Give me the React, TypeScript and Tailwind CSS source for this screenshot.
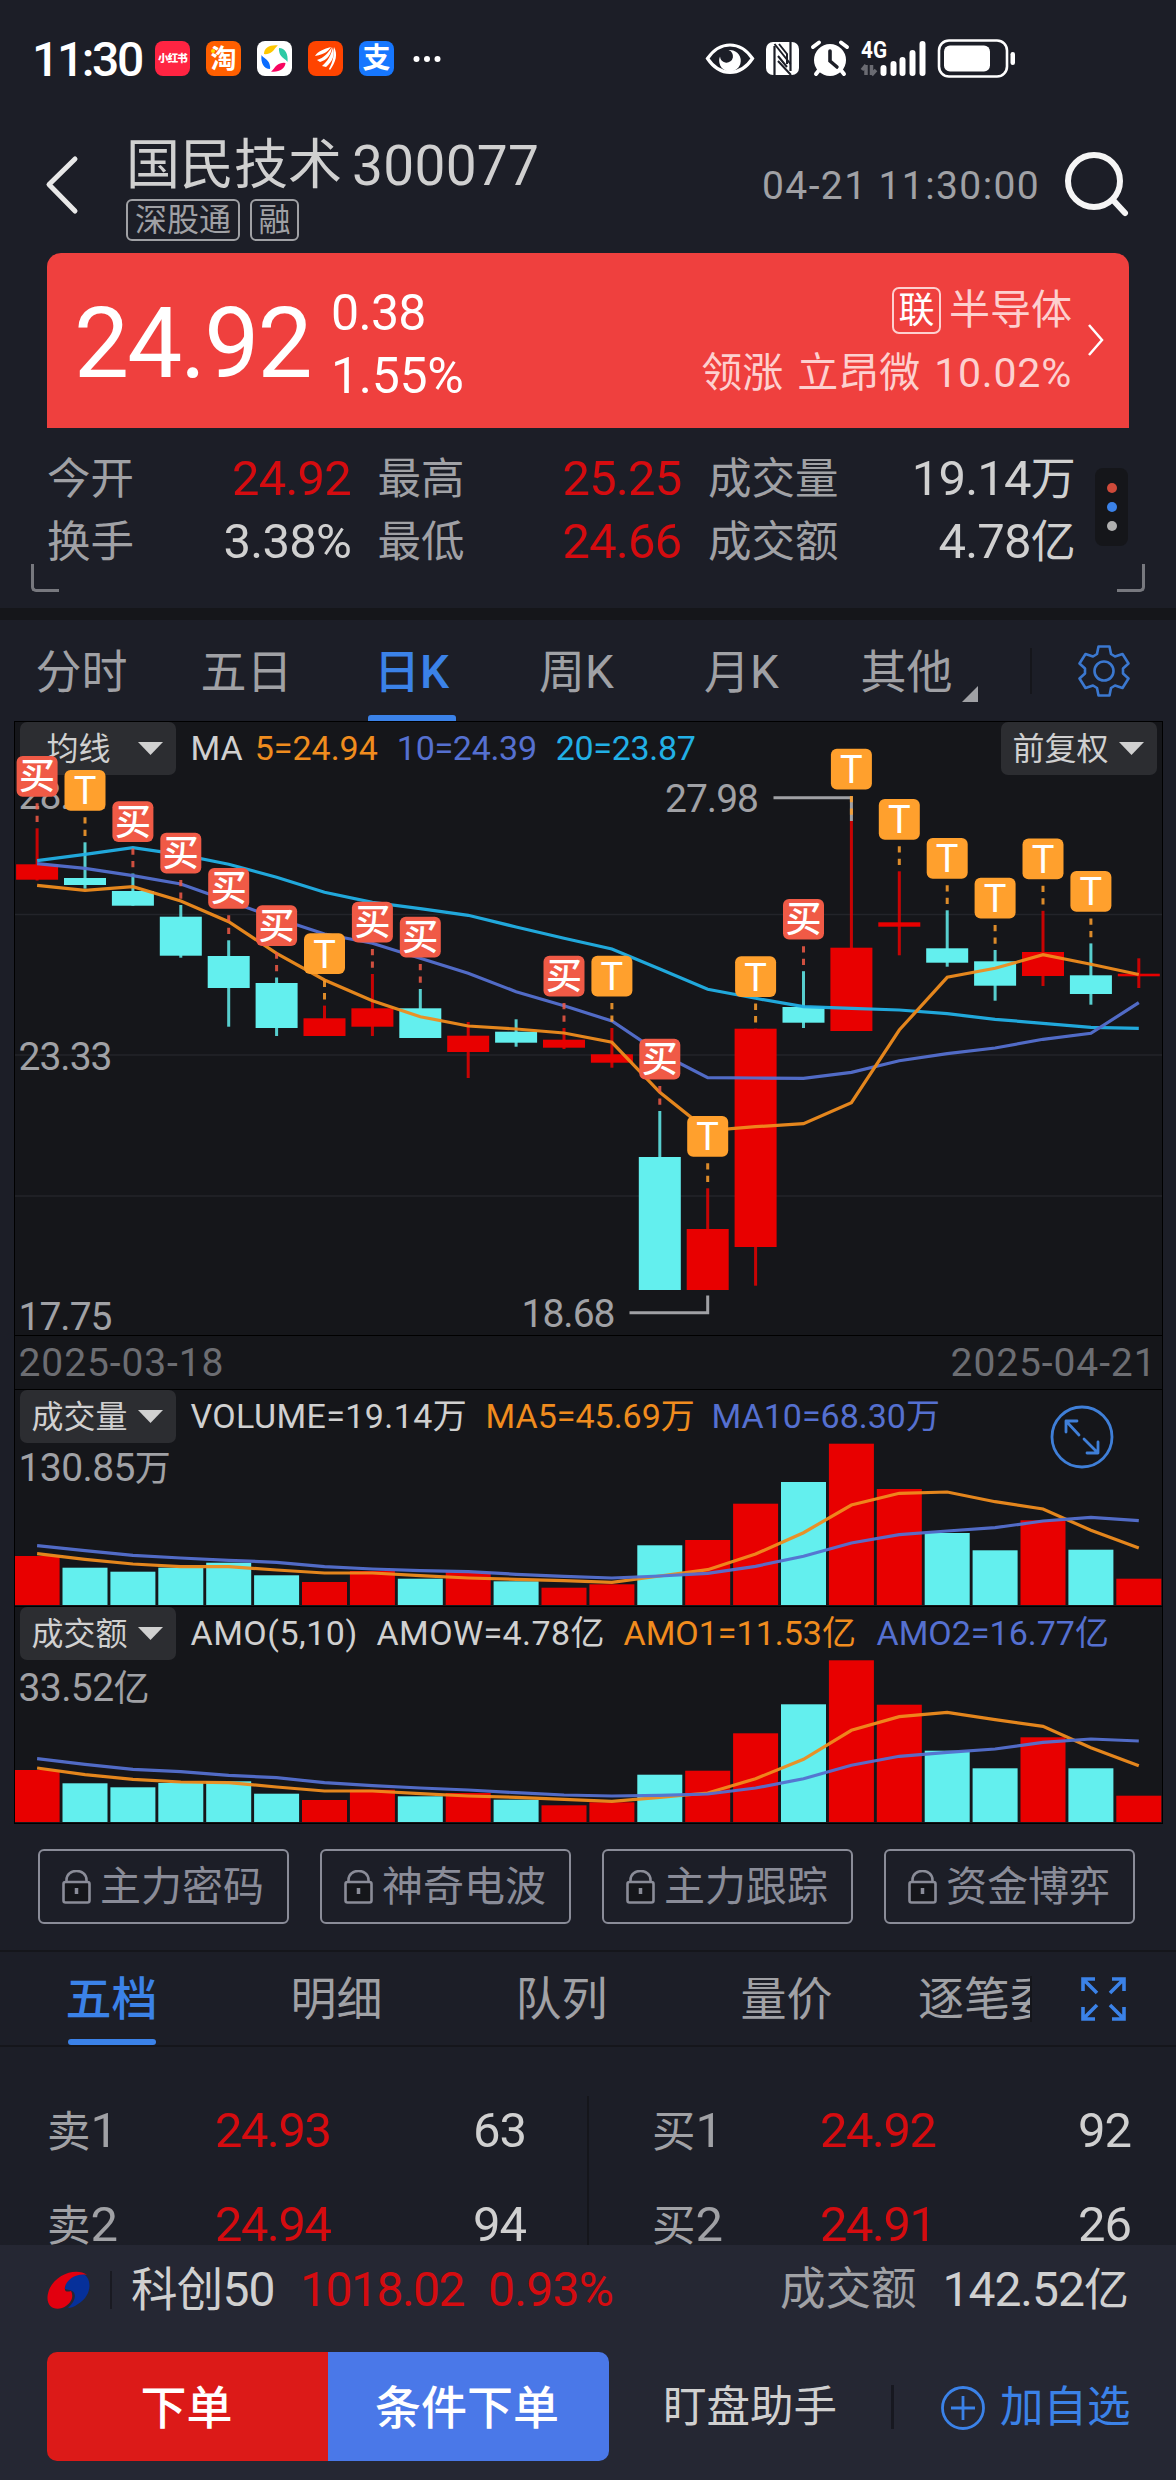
const CYAN = '#63efee';
const RED = '#e80000';
const ORANGE = '#f08c1e';
const INDIGO = '#5570d0';
const SKY = '#22b0e6';

type Candle = {
  up: boolean;
  high: number;
  top: number;
  bottom: number;
  low: number;
  mark?: '买' | 'T';
};

const candles: Candle[] = [
  { up: true, high: 828.3, top: 864.3, bottom: 879.7, low: 880.5, mark: '买' },
  { up: false, high: 842.3, top: 878, bottom: 885, low: 888.7, mark: 'T' },
  { up: false, high: 873.5, top: 891, bottom: 905.7, low: 905.7, mark: '买' },
  { up: false, high: 905, top: 916.7, bottom: 955.7, low: 957.7, mark: '买' },
  { up: false, high: 940.3, top: 956, bottom: 988, low: 1026.7, mark: '买' },
  { up: false, high: 977.5, top: 983, bottom: 1028, low: 1036, mark: '买' },
  { up: true, high: 1005.6, top: 1018.3, bottom: 1036, low: 1036, mark: 'T' },
  { up: true, high: 974, top: 1008.3, bottom: 1026.7, low: 1036, mark: '买' },
  { up: false, high: 989, top: 1008.3, bottom: 1038, low: 1038, mark: '买' },
  { up: true, high: 1022, top: 1035.7, bottom: 1052, low: 1078 },
  { up: false, high: 1019.3, top: 1031.7, bottom: 1042.7, low: 1046.7 },
  { up: true, high: 1028, top: 1039.7, bottom: 1047.7, low: 1049, mark: '买' },
  { up: true, high: 1028, top: 1054.3, bottom: 1062.7, low: 1067.7, mark: 'T' },
  { up: false, high: 1111, top: 1157, bottom: 1290, low: 1290, mark: '买' },
  { up: true, high: 1188.3, top: 1229, bottom: 1290, low: 1290, mark: 'T' },
  { up: true, high: 1028.6, top: 1028.7, bottom: 1247, low: 1285.7, mark: 'T' },
  { up: false, high: 971.2, top: 1007, bottom: 1022.7, low: 1028, mark: '买' },
  { up: true, high: 821, top: 947.7, bottom: 1031, low: 1031, mark: 'T' },
  { up: true, high: 871.3, top: 922.3, bottom: 926.7, low: 955.3, mark: 'T' },
  { up: false, high: 910.3, top: 948.3, bottom: 962.7, low: 966.7, mark: 'T' },
  { up: false, high: 950, top: 961.3, bottom: 985.7, low: 1000.7, mark: 'T' },
  { up: true, high: 910.8, top: 952, bottom: 976, low: 986, mark: 'T' },
  { up: false, high: 943.4, top: 975.3, bottom: 994, low: 1004.7, mark: 'T' },
  { up: true, high: 958.3, top: 973.7, bottom: 976.3, low: 988 },
];

const ma5 = [885.3, 890.3, 886.7, 901, 921.7, 953.3, 980, 1000.7, 1016.7, 1026, 1029, 1033, 1042.3, 1092.3, 1130.5, 1126.7, 1123.7, 1102.7, 1030, 977.3, 968.3, 954.7, 964.3, 974.5];
const ma10 = [863.7, 868.3, 875.7, 884, 901, 918.3, 934, 943.3, 958.3, 973.3, 991.7, 1005.7, 1021, 1053, 1077.7, 1078, 1078.3, 1072.3, 1060.7, 1053.7, 1048, 1039.3, 1033.3, 1002.7];
const ma20 = [860.7, 854.3, 847.7, 854.7, 864.3, 877.3, 892.3, 902.3, 908.7, 915.3, 927, 938.3, 949, 969, 989.3, 998.3, 1006.7, 1008.3, 1010, 1013.7, 1019.3, 1023.3, 1027.3, 1028.3];

// bar heights in px
const volume = [49, 37.3, 33.3, 37.3, 42.3, 29.7, 23, 34, 26.3, 33, 23.7, 17.3, 20.7, 59.7, 65, 101.3, 123, 161.3, 116, 72, 54.7, 84.7, 55.3, 26.3];
const volume5 = [51.3, 45.7, 41, 38.3, 38.3, 35, 32, 32, 29.3, 27, 25.7, 24.3, 22.7, 29, 35.3, 51, 72.3, 100, 111.7, 113, 103.3, 96, 74.7, 57];
const volume10 = [59.3, 54.3, 49.7, 47, 44.7, 42.7, 38.3, 36, 34.3, 33.3, 30.7, 28.7, 27, 29, 31.7, 38.7, 48.7, 62, 70.3, 74, 77.3, 84, 87.7, 84.3];
const amount = [52, 38.7, 34.7, 39, 40.7, 28.3, 22, 32.3, 25.7, 29, 22.3, 16.7, 19.7, 47.3, 51.3, 88.7, 117.7, 161.7, 117.3, 71.3, 53.7, 84.7, 53.7, 26.3];
const amount5 = [54, 47.3, 42.7, 40, 39.3, 35, 31, 31, 28.3, 26, 24.7, 22.7, 20.7, 24.7, 29, 43.3, 62.7, 91.7, 105.3, 109.7, 102.3, 95.7, 74.3, 56.3];
const amount10 = [63.3, 57.7, 52.7, 50.3, 46.7, 44.3, 39.3, 36.3, 34, 32, 29.3, 27, 26, 26.7, 28, 34, 43.3, 56.7, 65.7, 69.7, 73, 79.7, 83, 81];

const cx = (i: number) => 37.1 + i * 47.9;
const line = (ys: number[]) => ys.map((y, i) => `${cx(i).toFixed(1)},${y}`).join(' ');

function StatusBar() {
  return (
    <div className="flex h-[118px] items-start pt-[41px] pl-[32px]">
      <span className="h-[35px] w-[123px] text-[48px] leading-[38px] font-medium tracking-[-2.400px] text-white">11:30</span>
      <div className="flex gap-[16px]">
        <div className="flex size-[35px] items-center justify-center rounded-[8px] bg-[#ff2442] text-[10.500px] font-black tracking-[-0.800px] whitespace-nowrap text-white">
          小红书
        </div>
        <div className="relative flex size-[35px] items-center justify-center rounded-[8px] bg-[#ff5f00] text-[26px] leading-none font-bold text-white">
          淘
          <i className="absolute top-[8px] left-[5px] size-[4px] rounded-full bg-[#ffd800]" />
        </div>
        <svg className="size-[35px] rounded-[8px] bg-white" viewBox="0 0 35 35">
          <path d="M7 13 C7 7 13 3.500 21 4.500 C18 6 17 11 12 12.500 Q9 13.500 7 13 Z" fill="#ffc800" />
          <path d="M22 7 C28 7 31.500 13 30.500 21 C29 18 24 17 22.500 12 Q21.500 9 22 7 Z" fill="#2dcaa5" />
          <path d="M28.500 22 C28 28 22 31.500 14 30.500 C17 29 18 24 23 22.500 Q26 21.500 28.500 22 Z" fill="#f8045f" />
          <path d="M13 28 C7 28 3.500 22 4.500 14 C6 17 11 18 12.500 23 Q13.500 26 13 28 Z" fill="#0a6cff" />
        </svg>
        <svg className="size-[35px] rounded-[8px] bg-[#ff4400]" viewBox="0 0 35 35" fill="#fff">
          <path d="M7 15 C10 10 16 8 23 6 C20 10 18 13 7 15 Z" />
          <path d="M9 19 C16 17 20 12 24 6 C23 14 19 19 12 21 Z" />
          <path d="M14 25 C20 20 23 14 25 6 C27 14 25 20 18 26 Z" />
          <path d="M21 28 C25 21 26 14 26 6 C30 13 28 21 22 29 Z" />
        </svg>
        <div className="flex size-[35px] items-center justify-center rounded-[8px] bg-[#1677ff] text-[28px] leading-none font-bold text-white">
          支
        </div>
      </div>
      <svg className="mt-[14px] ml-[19px] h-[8px] w-[28px]" viewBox="0 0 28 8" fill="#fff">
        <circle cx="3.5" cy="4" r="3" />
        <circle cx="14" cy="4" r="3" />
        <circle cx="24.5" cy="4" r="3" />
      </svg>
      <svg className="-mt-[21px] ml-[249px] h-[80px] w-[340px]" viewBox="0 0 340 80" fill="#fff">
        <path d="M17.5 38.5 C30 20.500 50 20.500 62.500 38.500 C50 57 30 57 17.500 38.500 Z" fill="none" stroke="#fff" strokeWidth="3.2" />
        <path d="M38.500 30 A10.800 10.800 0 1 1 30 36.500 A6.500 6.500 0 1 0 38.500 30 Z" />
        <rect x="76" y="22" width="33" height="33" rx="7" />
        <path d="M84.500 26 V55 M100.500 22 V51" stroke="#1c1e27" strokeWidth="2.200" />
        <path d="M84.500 24 L100.500 44 M88 36 L97 47 M88 41 L101 55 M89 24 L97 34 V44" fill="none" stroke="#1c1e27" strokeWidth="2" />
        <circle cx="140" cy="40" r="16" />
        <path d="M140 31 V41 L147 47" fill="none" stroke="#1c1e27" strokeWidth="3.600" strokeLinecap="round" />
        <path d="M123 27 L129 22.500 M157 27 L151 22.500 M126 54 L130 49 M154 54 L150 49" stroke="#fff" strokeWidth="4" strokeLinecap="round" />
        <text x="171" y="38" fontSize="23" fontWeight="700" textLength="26" lengthAdjust="spacingAndGlyphs">4G</text>
        <path d="M176 45 V55 M176 45 L172 50 M181.500 45 V55 M181.500 55 L186 50" stroke="#6a6b72" strokeWidth="3.500" />
        <path d="M193.500 48 V53 M203.500 44 V53 M212.500 40 V53 M222.500 33 V53 M232.500 24 V53" stroke="#fff" strokeWidth="6" strokeLinecap="round" />
        <rect x="249" y="20.500" width="68" height="36" rx="10" fill="none" stroke="#fff" strokeWidth="2.600" />
        <rect x="254" y="25.500" width="46" height="26" rx="6" />
        <rect x="320.500" y="32" width="4.500" height="13" rx="2.200" />
      </svg>
    </div>
  );
}

function Header() {
  return (
    <header className="flex h-[135px]">
      <svg className="mt-[34px] ml-[41px] h-[64px] w-[40px]" viewBox="0 0 40 64" fill="none" stroke="#e8e8e8" strokeWidth="5" strokeLinecap="round" strokeLinejoin="round">
        <path d="M34 7 L8 32.500 L34 59" />
      </svg>
      <div className="ml-[45px] flex w-[500px] flex-col">
        <h1 className="mt-[18px] flex h-[60px] items-center text-[54px] leading-none whitespace-nowrap text-[#d0d0d0]">
          国民技术<span className="ml-[10px] text-[55px] tracking-[0.300px]">300077</span>
        </h1>
        <div className="mt-[3px] flex gap-[10px] text-[32px] leading-none text-[#a0a1a5]">
          <span className="flex h-[42px] w-[114px] items-center justify-center rounded-[6px] border-2 border-[#a0a1a5]">深股通</span>
          <span className="flex h-[42px] w-[49px] items-center justify-center rounded-[6px] border-2 border-[#a0a1a5]">融</span>
        </div>
      </div>
      <span className="mt-[49px] ml-[136px] w-[290px] text-[39px] leading-none tracking-[1.400px] whitespace-nowrap text-[#a0a1a5]">04-21 11:30:00</span>
      <svg className="mt-[30px] ml-[9px] size-[72px] shrink-0" viewBox="0 0 72 72" fill="none" stroke="#f5f5f5" strokeWidth="6" strokeLinecap="round">
        <circle cx="33" cy="33" r="26" />
        <path d="M52 52 L64 65" />
      </svg>
    </header>
  );
}

function PriceCard() {
  return (
    <section className="mx-[47px] flex h-[175px] justify-between rounded-t-[14px] bg-[#ef403e] pr-[21px] pl-[27px] leading-none text-white">
      <div className="flex">
        <span className="mt-[42px] w-[257px] text-[98px] tracking-[-1.900px]">24.92</span>
        <div className="mt-[35px] flex flex-col gap-[13px] text-[50px]">
          <span className="tracking-[-0.700px]">0.38</span>
          <span className="tracking-[-0.300px]">1.55%</span>
        </div>
      </div>
      <div className="flex">
        <div className="mt-[34px] flex flex-col items-end gap-[19px] text-[41px] whitespace-nowrap text-[#fdd0cf]">
          <span className="flex h-[47px] items-center gap-[8px]">
            <b className="flex h-[47px] w-[49px] items-center justify-center rounded-[7px] border-2 border-[#fdd0cf] text-[36px] font-normal text-white">联</b>
            半导体
          </span>
          <span className="flex h-[41px] gap-[14px]">
            <span>领涨</span>
            <span>立昂微</span>
            <span className="tracking-[0.800px]">10.02%</span>
          </span>
        </div>
        <svg className="mt-[69px] ml-[14px] h-[36px] w-[22px]" viewBox="0 0 22 36" fill="none" stroke="#fff" strokeWidth="2.500">
          <path d="M3 3 L16 18 L3 33" />
        </svg>
      </div>
    </section>
  );
}

const stats = [
  { rows: [['今开', '24.92', 'text-[#d40c10]'], ['换手', '3.38%', 'text-[#d0d0d0]']], width: 'w-[304px]' },
  { rows: [['最高', '25.25', 'text-[#d40c10]'], ['最低', '24.66', 'text-[#d40c10]']], width: 'w-[304px]' },
  { rows: [['成交量', '19.14万', 'text-[#d0d0d0]'], ['成交额', '4.78亿', 'text-[#d0d0d0]']], width: 'w-[367px]' },
];

function Stats() {
  return (
    <section className="relative flex h-[180px] pl-[47px] text-[49px] leading-none text-[#a0a1a5]">
      <div className="mt-[19px] flex gap-[26.500px]">
        {stats.map((col) => (
          <div key={col.rows[0][0]} className={col.width}>
            {col.rows.map(([label, value, color]) => (
              <div key={label} className="flex h-[63px] items-center justify-between whitespace-nowrap">
                <span className="mt-[2px] text-[43.500px]">{label}</span>
                <span className={`tracking-[-0.800px] ${color}`}>
                  {value.replace(/[万亿]/, '')}
                  <span className="text-[45px]">{value.match(/[万亿]/)}</span>
                </span>
              </div>
            ))}
          </div>
        ))}
      </div>
      <div className="mt-[40px] ml-[20px] flex h-[78px] w-[33px] flex-col items-center justify-center gap-[9px] rounded-[8px] bg-[#15161a]">
        <i className="size-[10px] rounded-full bg-[#cf4a3a]" />
        <i className="size-[10px] rounded-full bg-[#3b82e8]" />
        <i className="size-[10px] rounded-full bg-[#b0b0b0]" />
      </div>
      <i className="absolute top-[136px] left-[31px] h-[28px] w-[28px] rounded-bl-[5px] border-b-3 border-l-3 border-[#77787e]" />
      <i className="absolute top-[136px] right-[31px] h-[28px] w-[28px] rounded-br-[5px] border-r-3 border-b-3 border-[#77787e]" />
    </section>
  );
}

function PeriodTabs() {
  return (
    <nav className="flex h-[101px] items-center text-[46px] leading-none text-[#a0a1a5]">
      {['分时', '五日', '日K', '周K', '月K', '其他'].map((tab) => (
        <div key={tab} className="relative flex h-full w-[165px] items-center justify-center pt-[2px] pr-[2px]">
          {tab === '日K' ? <span className="font-medium text-[#3b82e8]">{tab}</span> : <span>{tab}</span>}
          {tab === '日K' && <i className="absolute bottom-0 h-[6px] w-[88px] rounded-t-[3px] bg-[#3b82e8]" />}
          {tab === '其他' && (
            <svg className="absolute right-[12px] bottom-[19px] size-[16px]" viewBox="0 0 16 16" fill="#a0a1a5">
              <path d="M16 0 V16 H0 Z" />
            </svg>
          )}
        </div>
      ))}
      <i className="ml-[40px] h-[46px] w-[2px] bg-[#15161b]" />
      <svg className="ml-[46px] size-[52px]" viewBox="0 0 52 52" fill="none" stroke="#3b78d0" strokeWidth="2.600" strokeLinejoin="round">
        <path d="M20.500 1.500 H31.500 L33 9 L37 11.500 L44.500 9 L50.500 18.500 L45 23.500 V28.500 L50.500 33.500 L44.500 43 L37 40.500 L33 43 L31.500 50.500 H20.500 L19 43 L15 40.500 L7.500 43 L1.500 33.500 L7 28.500 V23.500 L1.500 18.500 L7.500 9 L15 11.500 L19 9 Z" />
        <circle cx="26" cy="26" r="9.500" />
      </svg>
    </nav>
  );
}

function Dropdown({ label }: { label: string }) {
  return (
    <div className="flex h-[53px] w-[156px] shrink-0 items-center justify-between rounded-[7px] bg-[#2c2d31] pr-[13px] pl-[12px] text-[32px] text-[#d0d0d0]">
      <span className={label.length === 2 ? 'pl-[15px]' : ''}>{label}</span>
      <svg className="h-[13px] w-[25px]" viewBox="0 0 25 13" fill="#d0d0d0">
        <path d="M0 0 H25 L12.500 13 Z" />
      </svg>
    </div>
  );
}

function Marker({ x, high, mark }: { x: number; high: number; mark: '买' | 'T' }) {
  const color = mark === 'T' ? '#ffa02d' : '#f05a46';
  return (
    <g>
      <path d={`M${x} ${high - 25} V${high}`} stroke={color} strokeWidth="3" strokeDasharray="6.300 6.200" opacity="0.850" />
      <rect x={x - 20.5} y={high - 72.3} width="41" height="40.700" rx="6" fill={color} />
      <text
        x={x}
        y={mark === 'T' ? high - 38 : high - 39}
        textAnchor="middle"
        fontSize={mark === 'T' ? 38 : 36}
        fontWeight={mark === 'T' ? 400 : 500}
        fill="#fff"
      >
        {mark}
      </text>
    </g>
  );
}

function KLineChart() {
  return (
    <div className="relative h-[615px] border-t border-b border-black">
      <div className="flex justify-between pr-[5px] pl-[5px] leading-none">
        <div className="flex items-center">
          <Dropdown label="均线" />
          <div className="flex items-center gap-[19px] pb-[2px] pl-[15px] text-[34px] whitespace-nowrap">
            <span className="-mr-[7px] text-[#d0d0d0]">MA</span>
            <span className="text-[#f08c1e]">5=24.94</span>
            <span className="tracking-[-0.300px] text-[#5570d0]">10=24.39</span>
            <span className="tracking-[-0.300px] text-[#22b0e6]">20=23.87</span>
          </div>
        </div>
        <Dropdown label="前复权" />
      </div>
      <svg className="absolute -top-px left-0 h-[615px] w-[1149px] overflow-visible" viewBox="15 721 1149 615">
        <path d="M15 914.500 H1162 M15 1055 H1162 M15 1196 H1162" stroke="#23242a" strokeWidth="1.500" />
        <g fill="#a0a1a5" fontSize="39">
          <text x="18.500" y="809" textLength="94">28.91</text>
          <text x="18.500" y="1070" textLength="94">23.33</text>
          <text x="18.500" y="1330" textLength="94">17.75</text>
          <text x="665" y="812" textLength="94">27.98</text>
          <text x="521.500" y="1327" textLength="94">18.68</text>
        </g>
        <path d="M773.500 797.700 H851.400 V821 M629.500 1312.700 H707.700 V1295.500" fill="none" stroke="#a0a1a5" strokeWidth="3" />
        {candles.map((c, i) => (
          <g key={i} fill={c.up ? RED : CYAN}>
            <rect x={cx(i) - 1.5} y={c.high} width="3" height={c.low - c.high} opacity="0.850" />
            <rect x={cx(i) - 21} y={c.top} width="42" height={c.bottom - c.top} />
          </g>
        ))}
        <g fill="none" strokeWidth="3.200" opacity="0.950">
          <polyline points={line(ma20)} stroke={SKY} />
          <polyline points={line(ma10)} stroke={INDIGO} />
          <polyline points={line(ma5)} stroke={ORANGE} />
        </g>
        {candles.map((c, i) => c.mark && <Marker key={i} x={cx(i)} high={c.high} mark={c.mark} />)}
      </svg>
    </div>
  );
}

function Bars({ bars, fast, slow }: { bars: number[]; fast: number[]; slow: number[] }) {
  const flip = (values: number[]) => values.map((v) => 215 - v);
  return (
    <svg className="absolute bottom-0 left-0 h-[216px] w-[1149px]" viewBox="15 0 1149 216">
      {bars.map((h, i) => (
        <rect key={i} x={cx(i) - 22.5} y={215 - h} width="45" height={h} fill={candles[i].up ? RED : CYAN} />
      ))}
      <g fill="none" strokeWidth="3.200" opacity="0.950">
        <polyline points={line(flip(fast))} stroke={ORANGE} />
        <polyline points={line(flip(slow))} stroke={INDIGO} />
      </g>
    </svg>
  );
}

function Charts() {
  return (
    <section className="mx-[13.500px] w-[1149px] border-x border-black bg-[#15161a]">
      <KLineChart />
      <div className="flex h-[53px] items-center justify-between px-[4px] pt-[2px] text-[39px] leading-none tracking-[0.900px] text-[#6c6d72]">
        <span>2025-03-18</span>
        <span className="pr-[1px]">2025-04-21</span>
      </div>
      <div className="relative h-[218px] border-t border-b border-black leading-none">
        <div className="flex items-center pl-[5px]">
          <Dropdown label="成交量" />
          <div className="flex items-center gap-[19px] pb-[1px] pl-[15px] text-[34px] whitespace-nowrap">
            <span className="w-[276px] tracking-[0.400px] text-[#d0d0d0]">VOLUME=19.14万</span>
            <span className="w-[207px] text-[#f08c1e]">MA5=45.69万</span>
            <span className="text-[#5570d0]">MA10=68.30万</span>
          </div>
        </div>
        <div className="mt-[6px] pl-[4px] text-[39px] tracking-[-0.600px] text-[#a0a1a5]">
          130.85<span className="text-[36px]">万</span>
        </div>
        <Bars bars={volume} fast={volume5} slow={volume10} />
        <svg className="absolute top-[15px] right-[48px] size-[64px]" viewBox="0 0 64 64" fill="none" stroke="#3f7fd8" strokeWidth="2.800" strokeLinecap="round" strokeLinejoin="round">
          <circle cx="32" cy="32" r="30" />
          <path d="M29 30 L16 16 M16 27 V16 H27 M34 34 L48 48 M37 48 H48 V37" />
        </svg>
      </div>
      <div className="relative h-[217px] border-b border-black leading-none">
        <div className="flex items-center pl-[5px]">
          <Dropdown label="成交额" />
          <div className="flex items-center gap-[19px] pb-[1px] pl-[15px] text-[34px] whitespace-nowrap">
            <span className="w-[167px] tracking-[0.500px] text-[#d0d0d0]">AMO(5,10)</span>
            <span className="w-[228px] tracking-[0.400px] text-[#d0d0d0]">AMOW=4.78亿</span>
            <span className="w-[234px] text-[#f08c1e]">AMO1=11.53亿</span>
            <span className="text-[#5570d0]">AMO2=16.77亿</span>
          </div>
        </div>
        <div className="mt-[9px] pl-[4px] text-[39px] tracking-[-0.600px] text-[#a0a1a5]">
          33.52<span className="text-[36px]">亿</span>
        </div>
        <Bars bars={amount} fast={amount5} slow={amount10} />
      </div>
    </section>
  );
}

function LockedFeatures() {
  return (
    <div className="flex h-[126px] gap-[31.500px] pt-[25px] pl-[38px]">
      {['主力密码', '神奇电波', '主力跟踪', '资金博弈'].map((name) => (
        <div key={name} className="flex h-[75px] w-[250.500px] items-center gap-[9px] rounded-[6px] border-2 border-[#8a8c98] pl-[22px] text-[41px] leading-none whitespace-nowrap text-[#8a8c98]">
          <svg className="h-[34px] w-[29px] shrink-0" viewBox="0 0 29 34" fill="none" stroke="#8a8c98" strokeWidth="2.600">
            <path d="M4.500 12 V10 C4.500 -2 24.500 -2 24.500 10 V12" />
            <rect x="1.500" y="12" width="26" height="20.500" rx="2" fill="#15161a" />
            <path d="M14.500 18 V24" strokeWidth="3.500" />
          </svg>
          <span className="pt-[2px]">{name}</span>
        </div>
      ))}
    </div>
  );
}

function DetailTabs() {
  return (
    <nav className="flex h-[97px] items-center border-y-2 border-[#15161b] text-[46px] leading-none text-[#a0a1a5]">
      {['五档', '明细', '队列', '量价'].map((tab, i) => (
        <div key={tab} className="relative flex h-full w-[225px] items-center justify-center pr-[2px]">
          <span className={i === 0 ? 'font-medium text-[#3b82e8]' : ''}>{tab}</span>
          {i === 0 && <i className="absolute bottom-0 h-[6px] w-[88px] rounded-[3px] bg-[#3b82e8]" />}
        </div>
      ))}
      <div className="h-[50px] w-[130px] overflow-hidden pl-[18px] leading-[50px] whitespace-nowrap">逐笔委</div>
      <i className="h-[46px] w-[2px] bg-[#15161b]" />
      <svg className="ml-[49px] h-[44px] w-[45px]" viewBox="0 0 45 44" fill="none" stroke="#3b82e8" strokeWidth="3.600">
        <path d="M2 14 V2 H14 M2 2 L16 16 M31 2 H43 V14 M43 2 L29 16 M2 30 V42 H14 M2 42 L16 28 M31 42 H43 V30 M43 42 L29 28" />
      </svg>
    </nav>
  );
}

const sells = [['卖1', '24.93', '63'], ['卖2', '24.94', '94']];
const buys = [['买1', '24.92', '92'], ['买2', '24.91', '26']];

function OrderSide({ rows }: { rows: string[][] }) {
  return (
    <div className="w-[479px] shrink-0">
      {rows.map(([label, price, count]) => (
        <div key={label} className="flex h-[93.500px] items-center text-[49px]">
          <span className="w-[168px] text-[#a0a1a5]">
            <span className="text-[43.500px]">{label[0]}</span>
            {label[1]}
          </span>
          <span className="tracking-[-1.500px] text-[#d40c10]">{price}</span>
          <span className="ml-auto tracking-[-1px] text-[#d0d0d0]">{count}</span>
        </div>
      ))}
    </div>
  );
}

function OrderBook() {
  return (
    <section className="flex h-[198px] overflow-hidden pt-[37px] pl-[47px] leading-none">
      <OrderSide rows={sells} />
      <i className="mt-[12px] mr-[63px] ml-[61px] h-[160px] w-[2px] shrink-0 bg-[#15161b]" />
      <OrderSide rows={buys} />
    </section>
  );
}

function BottomBar() {
  return (
    <footer className="h-[236px] bg-[#252733] leading-none">
      <div className="flex h-[90px] items-center pr-[48px] pl-[47px] text-[48px] whitespace-nowrap text-[#d0d0d0]">
        <svg className="h-[40px] w-[44px]" viewBox="0 0 44 40">
          <path d="M18 19 C18 8 26 3 35 3 C46 8 45 26 31 34 C27 37 23 38 21 38 C30 30 30 21 22 20 Z" fill="#06309a" />
          <path d="M40 5 C30 -3 8 4 2 20 C-3 34 5 41 15 38 C25 34 27 26 24 21 C20 22 17 22 18 17 C20 9 30 3 40 5 Z" fill="#e2000f" />
        </svg>
        <i className="mr-[19px] ml-[19px] h-[38px] w-[2px] bg-[#191a22]" />
        <span className="w-[169px] tracking-[-0.800px]">
          <span className="text-[46.500px]">科创</span>50
        </span>
        <span className="w-[188px] tracking-[-1.500px] text-[#d40c10]">1018.02</span>
        <span className="tracking-[-0.700px] text-[#d40c10]">0.93%</span>
        <span className="ml-auto text-[45.500px] text-[#a0a1a5]">成交额</span>
        <span className="ml-[26px] tracking-[-1px]">
          142.52<span className="text-[45px]">亿</span>
        </span>
      </div>
      <div className="mt-[17px] flex h-[109px] items-center pl-[47px] text-[46px] whitespace-nowrap">
        <div className="flex h-full w-[281px] items-center justify-center rounded-l-[10px] bg-[#dc1a18] pt-[3px] pr-[2px] font-medium text-white">下单</div>
        <div className="flex h-full w-[281px] items-center justify-center rounded-r-[10px] bg-[#4a78e8] pt-[3px] pr-[3px] font-medium text-white">条件下单</div>
        <span className="ml-[54px] w-[228px] pt-[3px] text-[43.500px] text-[#d0d0d0]">盯盘助手</span>
        <i className="h-[44px] w-[3px] bg-[#171820]" />
        <svg className="mt-[3px] ml-[46px] size-[46px]" viewBox="0 0 46 46" fill="none" stroke="#3b82e8" strokeWidth="2.800">
          <circle cx="23" cy="23" r="20.500" />
          <path d="M23 11 V35 M11 23 H35" />
        </svg>
        <span className="ml-[14px] pt-[3px] text-[43.500px] text-[#3b82e8]">加自选</span>
      </div>
    </footer>
  );
}

export default function App() {
  return (
    <main className="h-[2480px] w-[1176px] overflow-hidden bg-[#1c1e27] font-['Roboto','Noto_Sans_CJK_SC',sans-serif]">
      <StatusBar />
      <Header />
      <PriceCard />
      <Stats />
      <div className="h-[12px] bg-[#15161a]" />
      <PeriodTabs />
      <Charts />
      <LockedFeatures />
      <DetailTabs />
      <OrderBook />
      <BottomBar />
    </main>
  );
}
